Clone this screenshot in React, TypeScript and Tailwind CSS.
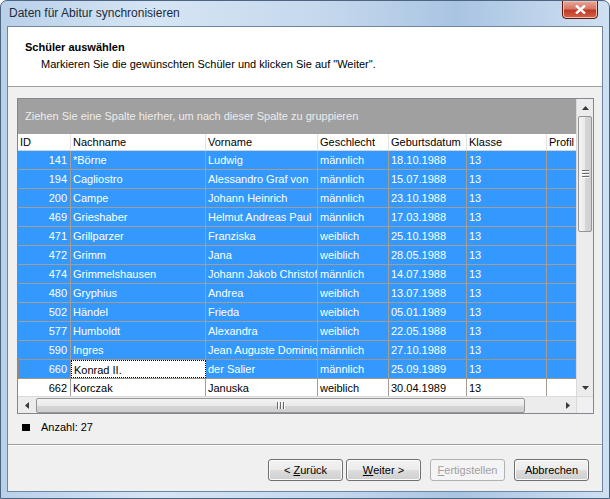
import React from 'react';

type Row = [number, string, string, string, string, string];

const rows: Row[] = [
  [141, '*Börne', 'Ludwig', 'männlich', '18.10.1988', '13'],
  [194, 'Cagliostro', 'Alessandro Graf von', 'männlich', '15.07.1988', '13'],
  [200, 'Campe', 'Johann Heinrich', 'männlich', '23.10.1988', '13'],
  [469, 'Grieshaber', 'Helmut Andreas Paul', 'männlich', '17.03.1988', '13'],
  [471, 'Grillparzer', 'Franziska', 'weiblich', '25.10.1988', '13'],
  [472, 'Grimm', 'Jana', 'weiblich', '28.05.1988', '13'],
  [474, 'Grimmelshausen', 'Johann Jakob Christof', 'männlich', '14.07.1988', '13'],
  [480, 'Gryphius', 'Andrea', 'weiblich', '13.07.1988', '13'],
  [502, 'Händel', 'Frieda', 'weiblich', '05.01.1989', '13'],
  [577, 'Humboldt', 'Alexandra', 'weiblich', '22.05.1988', '13'],
  [590, 'Ingres', 'Jean Auguste Dominique', 'männlich', '27.10.1988', '13'],
  [660, 'Konrad II.', 'der Salier', 'männlich', '25.09.1989', '13'],
  [662, 'Korczak', 'Januska', 'weiblich', '30.04.1989', '13'],
];

// feste Spaltenbreiten (inkl. rechter Linie)
const cols = [
  { title: 'ID', w: 'w-[53px]' },
  { title: 'Nachname', w: 'w-[135px]' },
  { title: 'Vorname', w: 'w-[112px]' },
  { title: 'Geschlecht', w: 'w-[71px]' },
  { title: 'Geburtsdatum', w: 'w-[78px]' },
  { title: 'Klasse', w: 'w-[80px]' },
  { title: 'Profil', w: 'w-[29px]' },
];

function Arrow({ dir }: { dir: 'up' | 'down' | 'left' | 'right' }) {
  const pts = {
    up: '0,4 7,4 3.5,0',
    down: '0,0 7,0 3.5,4',
    left: '4,0 4,7 0,3.5',
    right: '0,0 0,7 4,3.5',
  }[dir];
  const vert = dir === 'up' || dir === 'down';
  return (
    <svg width={vert ? 7 : 4} height={vert ? 4 : 7} viewBox={vert ? '0 0 7 4' : '0 0 4 7'}>
      <polygon points={pts} fill="#3a3a3a" />
    </svg>
  );
}

function Btn({ children, disabled }: { children: React.ReactNode; disabled?: boolean }) {
  return (
    <button
      className={
        disabled
          ? 'w-[75px] h-[22px] rounded-[3px] border border-[#adb2b5] bg-[#f4f4f4] text-[#a0a0a0] text-[11px] flex items-center justify-center whitespace-pre'
          : 'w-[75px] h-[22px] rounded-[3px] border border-[#707070] bg-[linear-gradient(to_bottom,#f2f2f2_0%,#ebebeb_50%,#dddddd_50%,#cfcfcf_100%)] shadow-[inset_0_0_0_1px_#fbfbfb] text-black text-[11px] flex items-center justify-center whitespace-pre'
      }
    >
      {children}
    </button>
  );
}

export default function App() {
  return (
    <div className="w-[610px] h-[499px] flex flex-col rounded-t-[7px] border border-[#4d6580] bg-[linear-gradient(to_right,#b9d0e9,#d6e5f4_25%,#c3d7ec_55%,#a9c4e2_75%,#cfe0f1)] font-['Liberation_Sans',Arial,sans-serif] text-black overflow-hidden">
      {/* Titelleiste */}
      <div className="h-[25px] flex justify-between pl-[8px] pr-[11px] shrink-0">
        <span className="text-[12px] leading-[25px] text-[#1e2b3a]">Daten für Abitur synchronisieren</span>
        <div className="w-[36px] h-[19px] -mt-[1px] rounded-b-[4px] border border-[#5a1a12] bg-[linear-gradient(to_bottom,#e8a898_0%,#d47766_45%,#c03a25_55%,#d5634c_100%)] flex items-center justify-center shadow-[inset_0_0_0_1px_#f0c0b0]">
          <svg width="11" height="9" viewBox="0 0 11 9">
            <path d="M1 0.5 L10 8.5 M10 0.5 L1 8.5" stroke="#ffffff" strokeWidth="2.4" />
          </svg>
        </div>
      </div>

      <div className="mx-[6px] mb-[6px] flex-1 border border-[#6f86a0] bg-[#f0f0f0] flex flex-col">
        {/* Kopfbereich */}
        <div className="h-[60px] bg-white border-b border-[#a0a0a0] pt-[13px] shrink-0">
          <div className="pl-[17px] text-[11px] leading-[14px] font-bold">Schüler auswählen</div>
          <div className="pl-[33px] mt-[3px] text-[11px] leading-[14px]">
            Markieren Sie die gewünschten Schüler und klicken Sie auf "Weiter".
          </div>
        </div>

        {/* Grid */}
        <div className="mt-[11px] ml-[9px] w-[577px] h-[316px] border border-[#828790] flex bg-white shrink-0">
          <div className="w-[558px] flex flex-col">
            <div className="h-[35px] bg-[#a0a0a0] flex items-center pl-[7px] text-[11px] text-[#ececec] shrink-0">
              Ziehen Sie eine Spalte hierher, um nach dieser Spalte zu gruppieren
            </div>
            <div className="h-[17px] flex bg-white border-b border-[#d5d5d5] shrink-0">
              {cols.map((c, i) => (
                <div
                  key={c.title}
                  className={`${c.w} h-full ${i < cols.length - 1 ? 'border-r border-[#e3e3e3]' : ''} pl-[2px] text-[11px] leading-[16px] overflow-hidden whitespace-nowrap`}
                >
                  {c.title}
                </div>
              ))}
            </div>
            <div className="h-[245px] overflow-hidden">
              {rows.map((r) => {
                const selected = r[0] !== 662;
                const focused = r[0] === 660;
                return (
                  <div key={r[0]} className="relative h-[19px] flex border-b border-[#a39d93]">
                    {r.map((v, i) => {
                      const white = !selected || (focused && i === 1);
                      return (
                        <div
                          key={i}
                          className={`${cols[i].w} h-full border-r border-[#a39d93] ${white ? 'bg-white text-black' : 'bg-[#3399ff] text-white'} ${i === 0 ? 'text-right pr-[3px]' : 'pl-[2px]'} ${focused && i === 1 ? 'border border-dotted border-black' : ''} text-[11px] leading-[18px] overflow-hidden whitespace-nowrap`}
                        >
                          {v}
                        </div>
                      );
                    })}
                    <div className={`w-[29px] h-full ${selected ? 'bg-[#3399ff]' : 'bg-white'}`} />
                    {focused && (
                      <div className="absolute -top-[1px] left-0 right-0 bottom-[-1px] border border-dotted border-[#e2801c] pointer-events-none" />
                    )}
                  </div>
                );
              })}
            </div>
            {/* horizontale Scrollleiste */}
            <div className="h-[17px] bg-[#ececec] border-t border-[#dadada] flex items-center shrink-0">
              <div className="w-[17px] flex items-center justify-center">
                <Arrow dir="left" />
              </div>
              <div className="w-[489px] h-[15px] rounded-[2px] border border-[#959595] bg-[linear-gradient(to_bottom,#f4f4f4,#e9e9e9_50%,#d6d6d6_51%,#cfcfcf)] flex items-center justify-center gap-[1px] ml-[1px]">
                <span className="w-[2px] h-[7px] bg-[#6a6a6a] border-r border-white" />
                <span className="w-[2px] h-[7px] bg-[#6a6a6a] border-r border-white" />
                <span className="w-[2px] h-[7px] bg-[#6a6a6a] border-r border-white" />
              </div>
              <div className="flex-1 flex items-center justify-end pr-[6px]">
                <Arrow dir="right" />
              </div>
            </div>
          </div>
          {/* vertikale Scrollleiste */}
          <div className="w-[17px] flex flex-col bg-[#ececec] border-l border-[#dadada]">
            <div className="h-[17px] flex items-center justify-center">
              <Arrow dir="up" />
            </div>
            <div className="h-[116px] mx-[1px] rounded-[2px] border border-[#959595] bg-[linear-gradient(to_right,#f4f4f4,#e9e9e9_50%,#d6d6d6_51%,#cfcfcf)] flex flex-col items-center justify-center gap-[1px]">
              <span className="w-[7px] h-[2px] bg-[#6a6a6a] border-b border-white" />
              <span className="w-[7px] h-[2px] bg-[#6a6a6a] border-b border-white" />
              <span className="w-[7px] h-[2px] bg-[#6a6a6a] border-b border-white" />
            </div>
            <div className="flex-1" />
            <div className="h-[17px] flex items-center justify-center">
              <Arrow dir="down" />
            </div>
            <div className="h-[17px] bg-[#f0f0f0] border-t border-[#dadada]" />
          </div>
        </div>

        {/* Anzahl */}
        <div className="mt-[6px] h-[14px] flex items-center shrink-0">
          <span className="ml-[14px] w-[8px] h-[7px] bg-black" />
          <span className="ml-[11px] text-[11px]">Anzahl: 27</span>
        </div>

        <div className="mt-[10px] h-[2px] border-t border-[#a0a0a0] border-b border-b-white shrink-0" />

        {/* Schaltflächen */}
        <div className="mt-[13px] flex justify-end pr-[13px] shrink-0">
          <Btn>
            {'< '}
            <u>Z</u>
            {'urück'}
          </Btn>
          <div className="w-[3px]" />
          <Btn>
            <u>W</u>
            {'eiter >'}
          </Btn>
          <div className="w-[9px]" />
          <Btn disabled>
            <u>F</u>
            {'ertigstellen'}
          </Btn>
          <div className="w-[9px]" />
          <Btn>Abbrechen</Btn>
        </div>
      </div>
    </div>
  );
}
